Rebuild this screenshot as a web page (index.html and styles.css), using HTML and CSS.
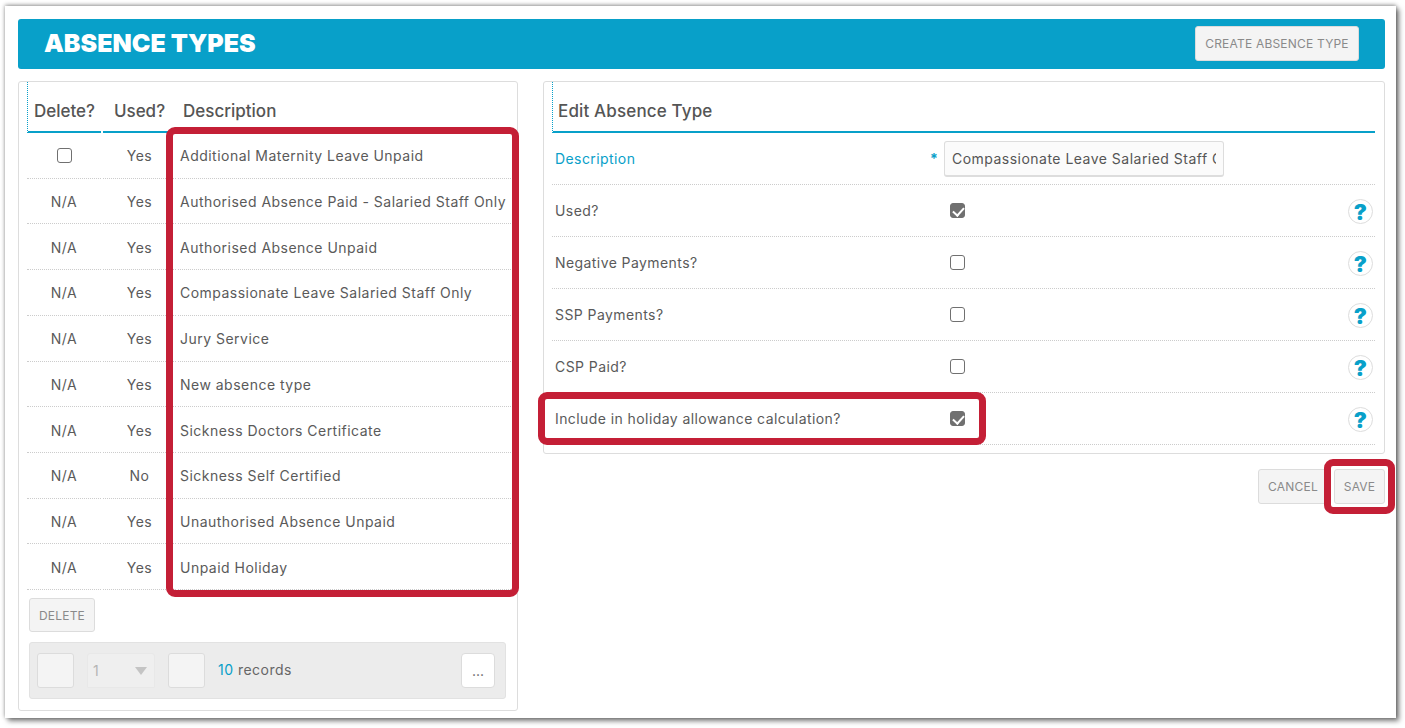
FILE: index.html
```html
<!DOCTYPE html>
<html lang="en">
<head>
<meta charset="utf-8">
<title>Absence Types</title>
<link rel="stylesheet" href="styles.css">
</head>
<body>
<div class="window">
  <header class="banner">
    <h1>ABSENCE TYPES</h1>
    <button class="btn btn-create">CREATE ABSENCE TYPE</button>
  </header>
  <div class="columns">
    <section class="panel panel-list">
      <div class="grid head">
        <div class="th">Delete?</div>
        <div class="th">Used?</div>
        <div class="th th-desc">Description</div>
      </div>
      <div class="grid row"><div class="td c"><input type="checkbox" class="cb"></div><div class="td c">Yes</div><div class="td">Additional Maternity Leave Unpaid</div></div>
      <div class="grid row"><div class="td c">N/A</div><div class="td c">Yes</div><div class="td">Authorised Absence Paid - Salaried Staff Only</div></div>
      <div class="grid row"><div class="td c">N/A</div><div class="td c">Yes</div><div class="td">Authorised Absence Unpaid</div></div>
      <div class="grid row"><div class="td c">N/A</div><div class="td c">Yes</div><div class="td">Compassionate Leave Salaried Staff Only</div></div>
      <div class="grid row"><div class="td c">N/A</div><div class="td c">Yes</div><div class="td">Jury Service</div></div>
      <div class="grid row"><div class="td c">N/A</div><div class="td c">Yes</div><div class="td">New absence type</div></div>
      <div class="grid row"><div class="td c">N/A</div><div class="td c">Yes</div><div class="td">Sickness Doctors Certificate</div></div>
      <div class="grid row"><div class="td c">N/A</div><div class="td c">No</div><div class="td">Sickness Self Certified</div></div>
      <div class="grid row"><div class="td c">N/A</div><div class="td c">Yes</div><div class="td">Unauthorised Absence Unpaid</div></div>
      <div class="grid row"><div class="td c">N/A</div><div class="td c">Yes</div><div class="td">Unpaid Holiday</div></div>
      <button class="btn btn-delete">DELETE</button>
      <div class="pager">
        <span class="page-btn"></span>
        <span class="page-select">1<i class="tri"></i></span>
        <span class="page-btn"></span>
        <span class="records"><b>10</b> records</span>
        <span class="more">...</span>
      </div>
    </section>
    <div class="side">
      <section class="panel panel-edit">
        <h2 class="edit-title">Edit Absence Type</h2>
        <div class="frow frow-first">
          <label class="flabel flabel-req">Description</label>
          <span class="star">*</span>
          <input class="text" type="text" value="Compassionate Leave Salaried Staff Only">
        </div>
        <div class="frow"><label class="flabel">Used?</label><input type="checkbox" class="cb" checked><span class="help">?</span></div>
        <div class="frow"><label class="flabel">Negative Payments?</label><input type="checkbox" class="cb"><span class="help">?</span></div>
        <div class="frow"><label class="flabel">SSP Payments?</label><input type="checkbox" class="cb"><span class="help">?</span></div>
        <div class="frow"><label class="flabel">CSP Paid?</label><input type="checkbox" class="cb"><span class="help">?</span></div>
        <div class="frow"><label class="flabel">Include in holiday allowance calculation?</label><input type="checkbox" class="cb" checked><span class="help">?</span></div>
      </section>
      <div class="actions">
        <button class="btn btn-cancel">CANCEL</button>
        <button class="btn btn-save">SAVE</button>
      </div>
    </div>
  </div>
  <div class="mark mark-list"></div>
  <div class="mark mark-allow"></div>
  <div class="mark mark-save"></div>
</div>
</body>
</html>
```
FILE: styles.css
```css
* { box-sizing: border-box; }
html, body { margin: 0; height: 100%; background: #fff; overflow: hidden; }
body { font-family: Inter, "Liberation Sans", sans-serif; font-size: 14px; color: #5a5a5a; }

.window {
  position: relative;
  width: 1391px;
  height: 712px;
  margin: 6px 0 0 5px;
  padding: 13px 11px 0 13px;
  background: #fff;
  box-shadow: 0 -1px 4px rgba(0,0,0,.4), 3px 3px 5px rgba(0,0,0,.5);
}

.banner {
  display: flex;
  align-items: center;
  justify-content: space-between;
  height: 50px;
  padding: 0 26px 2px 26px;
  background: #08a0c9;
  border-radius: 3px;
}
.banner h1 { margin: 0; font-size: 25px; font-weight: 900; color: #fff; }

.btn {
  height: 35px;
  padding: 0;
  background: #f4f4f4;
  border: 1px solid #dcdcdc;
  border-radius: 3px;
  font: 400 12px Inter, "Liberation Sans", sans-serif;
  letter-spacing: .2px;
  color: #8a8a8a;
}
.btn-create { width: 164px; }

.columns { display: flex; gap: 25px; margin-top: 12px; align-items: flex-start; }

.panel { background: #fff; border: 1px solid #ddd; border-radius: 3px; }
.panel-list { width: 500px; height: 630px; padding: 0 8px; }
.side { width: 842px; }
.panel-edit { height: 373px; padding: 0 9px 0 8px; }

.grid { display: grid; grid-template-columns: 74px 73px 333px; column-gap: 2px; }
.head { height: 51px; }
.th {
  display: flex;
  align-items: center;
  justify-content: center;
  padding-top: 9px;
  font-size: 17px;
  font-weight: 500;
  color: #555;
  border-bottom: 2px solid #08a0c9;
}
.th:first-child { border-left: 1px dotted #08a0c9; }
.th-desc { justify-content: flex-start; padding-left: 5px; }

.row { height: 45.72px; }
.td {
  display: flex;
  align-items: center;
  padding: .7px 0 0 2px;
  letter-spacing: .48px;
  white-space: nowrap;
  border-bottom: 1px dotted #ccc;
}
.td.c { justify-content: center; padding-left: 0; }

.cb {
  appearance: none;
  position: relative;
  width: 15px;
  height: 15px;
  margin: 0;
  background: #fff;
  border: 1px solid #707070;
  border-radius: 3px;
}
.cb:checked { background: #707070; }
.cb:checked::after {
  content: "";
  position: absolute;
  left: 4px;
  top: 1px;
  width: 5px;
  height: 9px;
  border: solid #fff;
  border-width: 0 2.5px 2.5px 0;
  transform: rotate(42deg);
}

.btn-delete { display: block; width: 66px; height: 34px; margin: 8px 0 0 2px; }

.pager {
  display: flex;
  align-items: center;
  width: 477px;
  height: 57px;
  margin: 10px 0 0 2px;
  padding: 0 10px 0 7px;
  background: #ececec;
  border: 1px solid #e2e2e2;
  border-radius: 3px;
}
.page-btn {
  width: 37px;
  height: 35px;
  background: #f4f4f4;
  border: 1px solid #dcdcdc;
  border-radius: 3px;
}
.page-select {
  display: flex;
  align-items: center;
  justify-content: space-between;
  width: 68px;
  height: 35px;
  margin: 0 13px;
  padding: 0 7px 0 5px;
  background: #efefef;
  border: 1px solid #e8e8e8;
  border-radius: 3px 3px 0 0;
  color: #b5b5b5;
}
.tri { width: 0; height: 0; border: 6px solid transparent; border-top: 8px solid #c4c4c4; border-bottom: 0; }
.records { margin: 0 0 2px 13px; letter-spacing: .48px; color: #666; }
.records b { font-weight: 400; color: #08a0c9; }
.more {
  display: flex;
  align-items: center;
  justify-content: center;
  width: 34px;
  height: 35px;
  margin-left: auto;
  background: #fff;
  border: 1px solid #dcdcdc;
  border-radius: 4px;
  color: #666;
}

.edit-title {
  display: flex;
  align-items: center;
  height: 51px;
  margin: 0;
  padding: 9px 0 0 5px;
  font-size: 17px;
  font-weight: 500;
  letter-spacing: .15px;
  color: #555;
  border-left: 1px dotted #08a0c9;
  border-bottom: 2px solid #08a0c9;
}

.frow {
  position: relative;
  display: flex;
  align-items: center;
  height: 52px;
  padding-left: 3px;
  border-bottom: 1px dotted #ccc;
  letter-spacing: .42px;
}
.flabel { width: 395px; white-space: nowrap; }
.flabel-req { width: 375px; color: #08a0c9; }
.star { width: 14px; color: #08a0c9; font-weight: 700; }
.text {
  width: 280px;
  height: 36px;
  padding: 0 7px;
  background: #fbfbfb;
  border: 1px solid #ddd;
  border-bottom-width: 2px;
  border-radius: 3px;
  font: 400 14px Inter, "Liberation Sans", sans-serif;
  letter-spacing: .48px;
  color: #555;
}
.help {
  position: absolute;
  right: 2px;
  top: 14px;
  display: flex;
  align-items: center;
  justify-content: center;
  width: 25px;
  height: 25px;
  background: #fff;
  border: 1px solid #ddd;
  border-radius: 50%;
  font-size: 22px;
  font-weight: 900;
  color: #08a0c9;
}

.actions { display: flex; justify-content: flex-end; gap: 6px; margin-top: 15px; }
.btn-cancel { width: 70px; }
.btn-save { width: 51px; }

.mark {
  position: absolute;
  border: 7px solid #c41f36;
  border-radius: 9px;
  pointer-events: none;
}
.mark-list { left: 161px; top: 121px; width: 353px; height: 470px; }
.mark-allow { left: 533px; top: 386px; width: 448px; height: 53px; }
.mark-save { left: 1319px; top: 453px; width: 71px; height: 55px; }
```
